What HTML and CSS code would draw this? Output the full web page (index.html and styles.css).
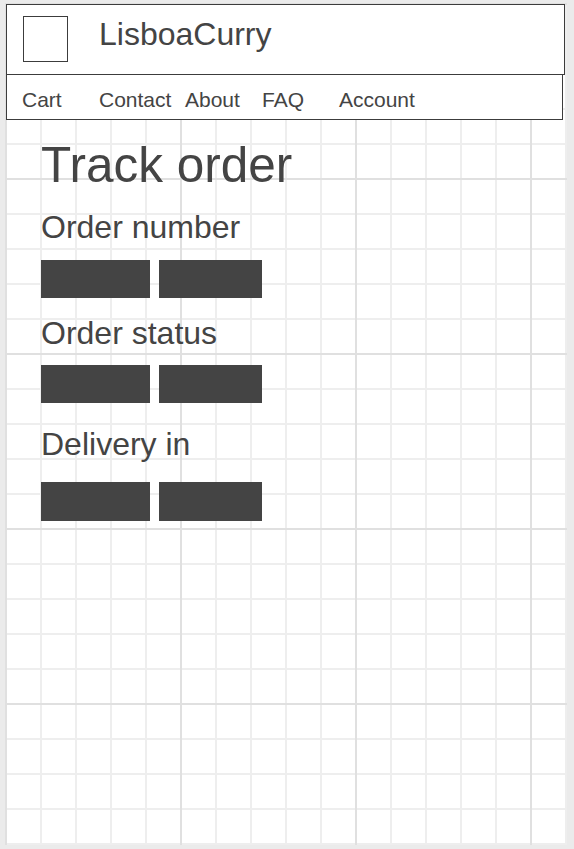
FILE: index.html
```html
<!DOCTYPE html>
<html lang="en">
<head>
<meta charset="utf-8">
<title>LisboaCurry – Track order</title>
<link rel="stylesheet" href="styles.css">
</head>
<body>
<div class="canvas">
  <header class="header">
    <div class="logo"></div>
    <div class="brand">LisboaCurry</div>
  </header>
  <nav class="nav">
    <a class="nav-item">Cart</a>
    <a class="nav-item">Contact</a>
    <a class="nav-item">About</a>
    <a class="nav-item">FAQ</a>
    <a class="nav-item">Account</a>
  </nav>
  <main class="main">
    <h1 class="title">Track order</h1>
    <section class="field field-number">
      <h2 class="label">Order number</h2>
      <div class="bars"><span class="bar bar-a"></span><span class="bar bar-b"></span></div>
    </section>
    <section class="field field-status">
      <h2 class="label">Order status</h2>
      <div class="bars"><span class="bar bar-a"></span><span class="bar bar-b"></span></div>
    </section>
    <section class="field field-delivery">
      <h2 class="label">Delivery in</h2>
      <div class="bars"><span class="bar bar-a"></span><span class="bar bar-b"></span></div>
    </section>
  </main>
</div>
</body>
</html>
```
FILE: styles.css
```css
html, body {
  margin: 0;
  padding: 0;
}
body {
  background: #ebebeb;
  font-family: "Liberation Sans", Arial, sans-serif;
  color: #444444;
  padding: 3px 0 0 5px;
  height: 849px;
  box-sizing: border-box;
  overflow: hidden;
}
.canvas {
  width: 562px;
  height: 842px;
  background-color: #ffffff;
  background-image:
    linear-gradient(to right, #e0e0e0 2px, transparent 2px),
    linear-gradient(to bottom, #e0e0e0 2px, transparent 2px),
    linear-gradient(to right, #eeeeee 2px, transparent 2px),
    linear-gradient(to bottom, #eeeeee 2px, transparent 2px);
  background-size: 175px 100%, 100% 175px, 35px 100%, 100% 35px;
  overflow: hidden;
}
.header {
  margin: 1px 0 0 1px;
  width: 559px;
  height: 71px;
  box-sizing: border-box;
  border: 1px solid #3c3c3c;
  background: #ffffff;
  display: flex;
  align-items: flex-start;
  padding: 11px 0 0 16px;
}
.logo {
  width: 45px;
  height: 46px;
  box-sizing: border-box;
  border: 1px solid #3c3c3c;
  margin-right: 31px;
  flex: none;
}
.brand {
  font-size: 32px;
  line-height: 37px;
}
.nav {
  margin-left: 1px;
  width: 557px;
  height: 45px;
  box-sizing: border-box;
  border: 1px solid #3c3c3c;
  border-top: 0;
  background: #ffffff;
  display: grid;
  grid-template-columns: 77px 86px 77px 77px auto;
  padding: 13px 0 0 15px;
  font-size: 21px;
  line-height: 24px;
}
.nav-item {
  color: #444444;
  text-decoration: none;
}
.main {
  padding: 17px 0 0 36px;
}
.title {
  margin: 0;
  font-weight: normal;
  font-size: 49.5px;
  line-height: 56px;
}
.label {
  margin: 0;
  font-weight: normal;
  font-size: 32px;
  line-height: 37px;
}
.field-number { margin-top: 16px; }
.field-number .bars { margin-top: 14px; }
.field-status { margin-top: 17px; }
.field-status .bars { margin-top: 13px; }
.field-delivery { margin-top: 23px; }
.field-delivery .bars { margin-top: 19px; }
.bars {
  display: flex;
  gap: 9px;
}
.bar {
  display: block;
  height: 38px;
  background: #444444;
}
.field-delivery .bar { height: 39px; }
.bar-a { width: 109px; }
.bar-b { width: 103px; }
```
